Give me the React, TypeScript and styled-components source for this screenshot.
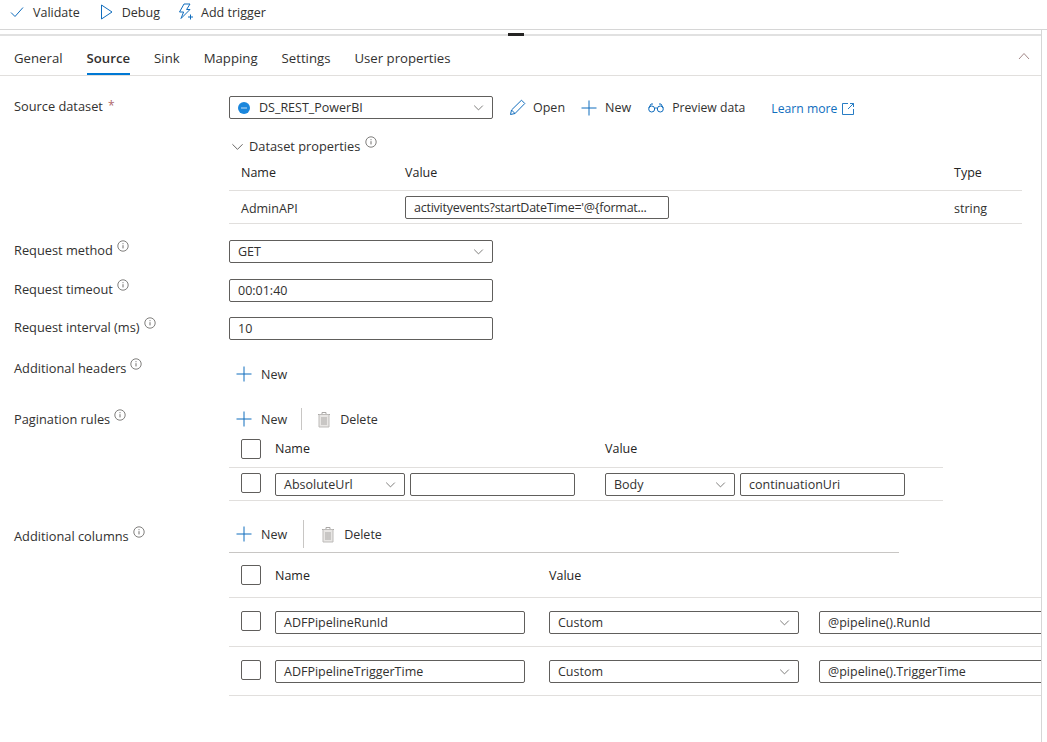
import { createGlobalStyle } from 'styled-components'
import styled from 'styled-components'

const GlobalStyle = createGlobalStyle`
  html, body {
    margin: 0;
    padding: 0;
    background: #fff;
  }
  body {
    font-family: 'Open Sans', 'Noto Sans', sans-serif;
    font-size: 12.5px;
    color: #323130;
    overflow: hidden;
  }
`

const Page = styled.div`
  width: 1047px;
  height: 742px;
  overflow: hidden;
`
const Toolbar = styled.div`
  display: flex;
  align-items: center;
  height: 24px;
  padding-left: 10px;
  padding-bottom: 5px;
  border-bottom: 1px solid #d6d6d6;
`
const ToolButton = styled.div<{ $gap: number; $left: number }>`
  display: flex;
  align-items: center;
  gap: ${(p) => p.$gap}px;
  margin-left: ${(p) => p.$left}px;
`
const Panel = styled.div`
  position: relative;
  width: 1041px;
  height: 712px;
  border-right: 1px solid #d6d6d6;
  overflow: hidden;
`
const Splitter = styled.div`
  margin-top: 4px;
  height: 2px;
  background: #e1e1e1;
`
const SplitterHandle = styled.div`
  position: absolute;
  top: 3px;
  left: 508px;
  width: 16px;
  height: 3px;
  background: #252423;
`
const TabBar = styled.div`
  display: flex;
  align-items: center;
  justify-content: space-between;
  height: 39px;
  padding: 0 11px 0 14px;
  border-bottom: 1px solid #e1dfdd;
`
const Tabs = styled.div`
  display: flex;
  gap: 24px;
  height: 100%;
`
const Tab = styled.div<{ $active?: boolean }>`
  display: flex;
  align-items: center;
  padding-top: 7px;
  height: 100%;
  box-sizing: border-box;
  font-size: 13.2px;
  font-weight: ${(p) => (p.$active ? 600 : 400)};
  border-bottom: 2px solid ${(p) => (p.$active ? '#0078d4' : 'transparent')};
  margin-bottom: -1px;
`
const FormBody = styled.div`
  padding-top: 20px;
`
const FieldRow = styled.div<{ $height: number }>`
  display: grid;
  grid-template-columns: 229px 1fr;
  height: ${(p) => p.$height}px;
`
const FieldLabel = styled.div<{ $offset: number }>`
  display: flex;
  align-items: flex-start;
  gap: 4px;
  padding-left: 14px;
  padding-top: ${(p) => p.$offset}px;
  height: 20px;
  line-height: 20px;
  font-size: 12.8px;
`
const Required = styled.span`
  color: #b0686b;
  font-size: 12px;
  margin-left: 1px;
`
const Control = styled.div<{ $width: number; $tight?: boolean }>`
  box-sizing: border-box;
  display: flex;
  align-items: center;
  justify-content: space-between;
  flex: none;
  width: ${(p) => p.$width}px;
  height: 23px;
  padding: 0 8px 0 8px;
  border: 1px solid #605e5c;
  border-radius: 2px;
  background: #fff;
  white-space: nowrap;
  letter-spacing: ${(p) => (p.$tight ? '-0.25px' : 'normal')};
`
const ControlText = styled.span`
  display: flex;
  align-items: center;
  gap: 9px;
`
const DatasetRow = styled.div`
  display: flex;
  align-items: center;
`
const LinkAction = styled.div<{ $gap: number; $left: number }>`
  display: flex;
  align-items: center;
  gap: ${(p) => p.$gap}px;
  margin-left: ${(p) => p.$left}px;
  white-space: nowrap;
`
const PreviewLabel = styled.span`
  font-size: 12.2px;
`
const LearnMore = styled.div`
  display: flex;
  align-items: center;
  gap: 5px;
  margin-left: 26px;
  padding-top: 2px;
  font-size: 12.2px;
  color: #106ebe;
`
const PropsHeader = styled.div`
  display: flex;
  align-items: center;
  height: 20px;
  margin-top: 17px;
  gap: 5px;
  padding-left: 2px;
  font-size: 12.8px;
  font-weight: 500;
`
const RaisedIcon = styled.span`
  display: flex;
  margin-top: -8px;
`
const PropsTable = styled.div`
  width: 793px;
  margin-top: 6px;
`
const TableRow = styled.div<{ $columns: string; $height: number; $bottom?: number }>`
  display: grid;
  grid-template-columns: ${(p) => p.$columns};
  align-items: center;
  box-sizing: content-box;
  height: ${(p) => p.$height - (p.$bottom ?? 0)}px;
  padding-bottom: ${(p) => p.$bottom ?? 0}px;
  border-bottom: 1px solid #e1dfdd;
`
const Heading = styled.div`
  font-weight: 500;
  color: #252423;
`
const CellText = styled.span`
  padding-top: 2px;
`
const IconAction = styled.div`
  display: flex;
  align-items: center;
  gap: 9px;
  padding-left: 7px;
`
const ActionBar = styled.div<{ $height: number; $line?: boolean; $width?: number }>`
  display: flex;
  align-items: center;
  height: ${(p) => p.$height}px;
  width: ${(p) => (p.$width ? `${p.$width}px` : 'auto')};
  padding-bottom: ${(p) => (p.$line ? '4px' : '0')};
  border-bottom: ${(p) => (p.$line ? '1px solid #c8c6c4' : 'none')};
`
const Divider = styled.div<{ $height: number; $left: number; $right: number }>`
  width: 1px;
  height: ${(p) => p.$height}px;
  background: #c8c6c4;
  margin: 0 ${(p) => p.$right}px 0 ${(p) => p.$left}px;
`
const DeleteAction = styled.div`
  display: flex;
  align-items: center;
  gap: 9px;
  padding-left: 2px;
`
const CheckBox = styled.div<{ $raised?: boolean }>`
  box-sizing: border-box;
  width: 20px;
  height: 20px;
  margin-left: 12px;
  margin-top: ${(p) => (p.$raised ? '-3px' : '0')};
  border: 1px solid #605e5c;
  border-radius: 2px;
`
const Cells = styled.div<{ $gap: number }>`
  display: flex;
  gap: ${(p) => p.$gap}px;
`
const RuleTable = styled.div`
  width: 714px;
`
const ColumnsTable = styled.div`
  width: 812px;
`
const InfoMark = styled.svg`
  flex: none;
`

const Info = () => (
  <InfoMark width="12" height="12" viewBox="0 0 12 12" fill="none">
    <circle cx="6" cy="6" r="5.2" stroke="#605e5c" strokeWidth="0.8" />
    <path d="M6 5.2v3.2M6 3.2v1" stroke="#605e5c" strokeWidth="0.9" />
  </InfoMark>
)
const Chevron = ({ size = 11 }: { size?: number }) => (
  <svg width={size} height={size} viewBox="0 0 11 11" fill="none">
    <path d="M1.2 3.6l4.3 4.3 4.3-4.3" stroke="#605e5c" strokeWidth="0.8" />
  </svg>
)
const Plus = () => (
  <svg width="16" height="16" viewBox="0 0 16 16" fill="none">
    <path d="M8 .5v15M.5 8h15" stroke="#0f6cbd" strokeWidth="1" />
  </svg>
)
const Trash = () => (
  <svg width="14" height="17" viewBox="0 0 14 17" fill="none">
    <path d="M1 3.5h12M5 3.5V1.5h4v2" stroke="#a9a7a5" strokeWidth="1" />
    <path d="M2 3.5h10v12.5H2z" fill="#e8e6e4" stroke="#bdbbb9" strokeWidth="1" />
    <path d="M5 6v8M7 6v8M9 6v8" stroke="#a9a7a5" strokeWidth="1" />
  </svg>
)
const CheckIcon = () => (
  <svg width="14" height="12" viewBox="0 0 14 12" fill="none">
    <path d="M1 6.5l4 4L13 1.5" stroke="#0f6cbd" strokeWidth="1" />
  </svg>
)
const PlayIcon = () => (
  <svg width="13" height="16" viewBox="0 0 13 16" fill="none">
    <path d="M1.5 1v14L12 8z" stroke="#0f6cbd" strokeWidth="1" strokeLinejoin="round" />
  </svg>
)
const TriggerIcon = () => (
  <svg width="16" height="18" viewBox="0 0 16 18" fill="none">
    <path d="M6 1h6L8.6 6.5H12L3 15.5 5.6 9H1.5z" stroke="#0f6cbd" strokeWidth="1" strokeLinejoin="round" />
    <path d="M12.5 11.5v5M10 14h5" stroke="#0f6cbd" strokeWidth="1" />
  </svg>
)
const Pencil = () => (
  <svg width="17" height="17" viewBox="0 0 17 17" fill="none">
    <path d="M1.5 15.5l1-4.5L12.5 1.2l3.3 3.3L6 14.5z" stroke="#0f6cbd" strokeWidth="1" strokeLinejoin="round" />
    <path d="M2.5 11l3.5 3.5" stroke="#0f6cbd" strokeWidth="1" />
  </svg>
)
const Glasses = () => (
  <svg width="16" height="10" viewBox="0 0 16 10" fill="none">
    <circle cx="3.7" cy="6" r="3" stroke="#0f6cbd" strokeWidth="1" />
    <circle cx="12.3" cy="6" r="3" stroke="#0f6cbd" strokeWidth="1" />
    <path d="M6.7 5.5c1-.8 1.6-.8 2.6 0M.8 5L3 1h2M15.2 5L13 1h-2" stroke="#0f6cbd" strokeWidth="1" />
  </svg>
)
const External = () => (
  <svg width="12" height="12" viewBox="0 0 12 12" fill="none">
    <path d="M6 .5H.5v11h11V6" stroke="#106ebe" strokeWidth="0.9" />
    <path d="M6 6L11.5.5M8 .5h3.5V4" stroke="#106ebe" strokeWidth="0.9" />
  </svg>
)
const DatasetIcon = () => (
  <svg width="12" height="12" viewBox="0 0 12 12">
    <circle cx="6" cy="6" r="6" fill="#1a86dc" />
    <path d="M3 5.4h6v1.2H3z" fill="#a9d0f0" />
  </svg>
)

const Select = ({ width, value }: { width: number; value: string }) => (
  <Control $width={width}>
    {value}
    <Chevron />
  </Control>
)

const PROP_COLUMNS = '12px 164px 549px 1fr'
const RULE_COLUMNS = '46px 330px 1fr'
const COLUMN_COLUMNS = '46px 274px 1fr'

export default function App() {
  return (
    <Page>
      <GlobalStyle />
      <Toolbar>
        <ToolButton $gap={9} $left={0}>
          <CheckIcon />
          Validate
        </ToolButton>
        <ToolButton $gap={9} $left={20}>
          <PlayIcon />
          Debug
        </ToolButton>
        <ToolButton $gap={7} $left={18}>
          <TriggerIcon />
          Add trigger
        </ToolButton>
      </Toolbar>
      <Panel>
        <Splitter />
        <SplitterHandle />
        <TabBar>
          <Tabs>
            <Tab>General</Tab>
            <Tab $active>Source</Tab>
            <Tab>Sink</Tab>
            <Tab>Mapping</Tab>
            <Tab>Settings</Tab>
            <Tab>User properties</Tab>
          </Tabs>
          <svg width="12" height="8" viewBox="0 0 12 8" fill="none">
            <path d="M1 7l5-5.5L11 7" stroke="#8a6a6a" strokeWidth="0.8" />
          </svg>
        </TabBar>
        <FormBody>
          <FieldRow $height={144}>
            <FieldLabel $offset={0}>
              Source dataset <Required>*</Required>
            </FieldLabel>
            <div>
              <DatasetRow>
                <Control $width={264}>
                  <ControlText>
                    <DatasetIcon />
                    DS_REST_PowerBI
                  </ControlText>
                  <Chevron />
                </Control>
                <LinkAction $gap={7} $left={16}>
                  <Pencil />
                  Open
                </LinkAction>
                <LinkAction $gap={8} $left={16}>
                  <Plus />
                  New
                </LinkAction>
                <LinkAction $gap={8} $left={17}>
                  <Glasses />
                  <PreviewLabel>Preview data</PreviewLabel>
                </LinkAction>
                <LearnMore>
                  Learn more
                  <External />
                </LearnMore>
              </DatasetRow>
              <PropsHeader>
                <Chevron size={13} />
                Dataset properties
                <RaisedIcon>
                  <Info />
                </RaisedIcon>
              </PropsHeader>
              <PropsTable>
                <TableRow $columns={PROP_COLUMNS} $height={28} $bottom={7}>
                  <span />
                  <Heading>Name</Heading>
                  <Heading>Value</Heading>
                  <Heading>Type</Heading>
                </TableRow>
                <TableRow $columns={PROP_COLUMNS} $height={32}>
                  <span />
                  <CellText>AdminAPI</CellText>
                  <Control $width={264} $tight>
                    activityevents?startDateTime='@&#123;format...
                  </Control>
                  <CellText>string</CellText>
                </TableRow>
              </PropsTable>
            </div>
          </FieldRow>
          <FieldRow $height={39}>
            <FieldLabel $offset={0}>
              Request method <Info />
            </FieldLabel>
            <Select width={264} value="GET" />
          </FieldRow>
          <FieldRow $height={38}>
            <FieldLabel $offset={0}>
              Request timeout <Info />
            </FieldLabel>
            <Control $width={264}>00:01:40</Control>
          </FieldRow>
          <FieldRow $height={38}>
            <FieldLabel $offset={0}>
              Request interval (ms) <Info />
            </FieldLabel>
            <Control $width={264}>10</Control>
          </FieldRow>
          <FieldRow $height={53}>
            <FieldLabel $offset={3}>
              Additional headers <Info />
            </FieldLabel>
            <ActionBar $height={38}>
              <IconAction>
                <Plus />
                New
              </IconAction>
            </ActionBar>
          </FieldRow>
          <FieldRow $height={112}>
            <FieldLabel $offset={1}>
              Pagination rules <Info />
            </FieldLabel>
            <RuleTable>
              <ActionBar $height={22}>
                <IconAction>
                  <Plus />
                  New
                </IconAction>
                <Divider $height={22} $left={14} $right={13} />
                <DeleteAction>
                  <Trash />
                  Delete
                </DeleteAction>
              </ActionBar>
              <TableRow $columns={RULE_COLUMNS} $height={37}>
                <CheckBox />
                <Heading>Name</Heading>
                <Heading>Value</Heading>
              </TableRow>
              <TableRow $columns={RULE_COLUMNS} $height={32}>
                <CheckBox $raised />
                <Cells $gap={5}>
                  <Select width={130} value="AbsoluteUrl" />
                  <Control $width={165} />
                </Cells>
                <Cells $gap={5}>
                  <Select width={130} value="Body" />
                  <Control $width={165}>continuationUri</Control>
                </Cells>
              </TableRow>
            </RuleTable>
          </FieldRow>
          <FieldRow $height={176}>
            <FieldLabel $offset={6}>
              Additional columns <Info />
            </FieldLabel>
            <ColumnsTable>
              <ActionBar $height={28} $line $width={670}>
                <IconAction>
                  <Plus />
                  New
                </IconAction>
                <Divider $height={28} $left={16} $right={15} />
                <DeleteAction>
                  <Trash />
                  Delete
                </DeleteAction>
              </ActionBar>
              <TableRow $columns={COLUMN_COLUMNS} $height={44}>
                <CheckBox />
                <Heading>Name</Heading>
                <Heading>Value</Heading>
              </TableRow>
              <TableRow $columns={COLUMN_COLUMNS} $height={48}>
                <CheckBox $raised />
                <Control $width={250}>ADFPipelineRunId</Control>
                <Cells $gap={20}>
                  <Select width={250} value="Custom" />
                  <Control $width={240}>@pipeline().RunId</Control>
                </Cells>
              </TableRow>
              <TableRow $columns={COLUMN_COLUMNS} $height={48}>
                <CheckBox $raised />
                <Control $width={250}>ADFPipelineTriggerTime</Control>
                <Cells $gap={20}>
                  <Select width={250} value="Custom" />
                  <Control $width={240}>@pipeline().TriggerTime</Control>
                </Cells>
              </TableRow>
            </ColumnsTable>
          </FieldRow>
        </FormBody>
      </Panel>
    </Page>
  )
}
